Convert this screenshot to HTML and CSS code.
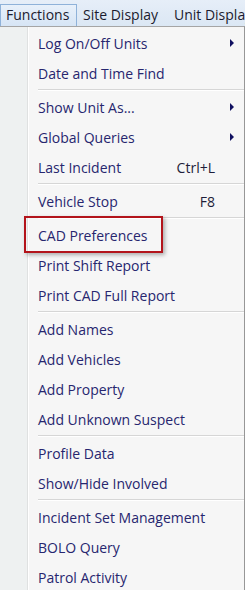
FILE: index.html
```html
<!DOCTYPE html>
<html>
<head>
<meta charset="utf-8">
<link rel="stylesheet" href="styles.css">
</head>
<body>
<div class="menubar">
  <div class="mb-item active">Functions</div>
  <div class="mb-item">Site Display</div>
  <div class="mb-item">Unit Display</div>
</div>
<div class="menu">
  <div class="gutter"></div>
  <div class="items">
    <div class="item"><span class="label">Log On/Off Units</span><span class="arrow"></span></div>
    <div class="item"><span class="label">Date and Time Find</span></div>
    <div class="sep"></div>
    <div class="item"><span class="label">Show Unit As...</span><span class="arrow"></span></div>
    <div class="item"><span class="label">Global Queries</span><span class="arrow"></span></div>
    <div class="item"><span class="label">Last Incident</span><span class="key">Ctrl+L</span></div>
    <div class="sep"></div>
    <div class="item"><span class="label">Vehicle Stop</span><span class="key">F8</span></div>
    <div class="sep"></div>
    <div class="item highlighted"><span class="label">CAD Preferences</span><span class="callout"></span></div>
    <div class="item"><span class="label">Print Shift Report</span></div>
    <div class="item"><span class="label">Print CAD Full Report</span></div>
    <div class="sep"></div>
    <div class="item"><span class="label">Add Names</span></div>
    <div class="item"><span class="label">Add Vehicles</span></div>
    <div class="item"><span class="label">Add Property</span></div>
    <div class="item"><span class="label">Add Unknown Suspect</span></div>
    <div class="sep"></div>
    <div class="item"><span class="label">Profile Data</span></div>
    <div class="item"><span class="label">Show/Hide Involved</span></div>
    <div class="sep"></div>
    <div class="item"><span class="label">Incident Set Management</span></div>
    <div class="item"><span class="label">BOLO Query</span></div>
    <div class="item"><span class="label">Patrol Activity</span></div>
  </div>
</div>
</body>
</html>
```
FILE: styles.css
```css
html, body {
  margin: 0;
  padding: 0;
  background: #f6f6f6;
  overflow: hidden;
}
body {
  font-family: "Open Sans", "Noto Sans", "Liberation Sans", sans-serif;
  font-size: 14px;
  width: 245px;
  height: 590px;
}
.menubar {
  height: 26px;
  background: linear-gradient(#e6eef8, #dbe7f4);
  display: flex;
  align-items: flex-end;
  white-space: nowrap;
  overflow: hidden;
  color: #1b1b2e;
}
.mb-item {
  height: 22px;
  line-height: 20px;
  padding: 0 7px 0 5px;
  margin-right: 2px;
  border: 1px solid transparent;
  border-bottom: none;
  box-sizing: border-box;
  flex-shrink: 0;
}
.mb-item.active {
  width: 77px;
  margin-right: 0;
  border-color: #8fb2d9;
  background: linear-gradient(#e8f0fa, #d6e5f5);
}
.menu {
  display: flex;
  width: 244px;
  height: 564px;
  border-top: 1px solid #a5a5a5;
  border-right: 1px solid #979797;
  background: #f6f6f6;
}
.gutter {
  width: 27px;
  background: #eef1f1;
  border-right: 1px solid #dfe1e1;
  box-shadow: 1px 0 0 #ffffff;
  flex-shrink: 0;
}
.items {
  flex: 1;
  padding-top: 1px;
  margin-left: 1px;
}
.item {
  position: relative;
  height: 30px;
  display: flex;
  align-items: center;
  padding-left: 9px;
  color: #27266f;
  white-space: nowrap;
}
.label {
  flex: 1;
}
.key {
  margin-right: 29px;
  color: #1e1e3a;
}
.arrow {
  width: 0;
  height: 0;
  border-top: 4px solid transparent;
  border-bottom: 4px solid transparent;
  border-left: 4px solid #101060;
  margin-right: 10px;
}
.sep {
  height: 4px;
  margin-left: 9px;
  box-sizing: border-box;
  padding-top: 1px;
}
.sep::after {
  content: "";
  display: block;
  height: 1px;
  background: #d6d6d6;
  border-bottom: 1px solid #ffffff;
}
.callout {
  position: absolute;
  left: -5px;
  top: -4px;
  width: 139px;
  height: 37px;
  box-sizing: border-box;
  border: 2px solid #b3141b;
  box-shadow: 2px 2px 4px rgba(0, 0, 0, 0.3);
}
```
